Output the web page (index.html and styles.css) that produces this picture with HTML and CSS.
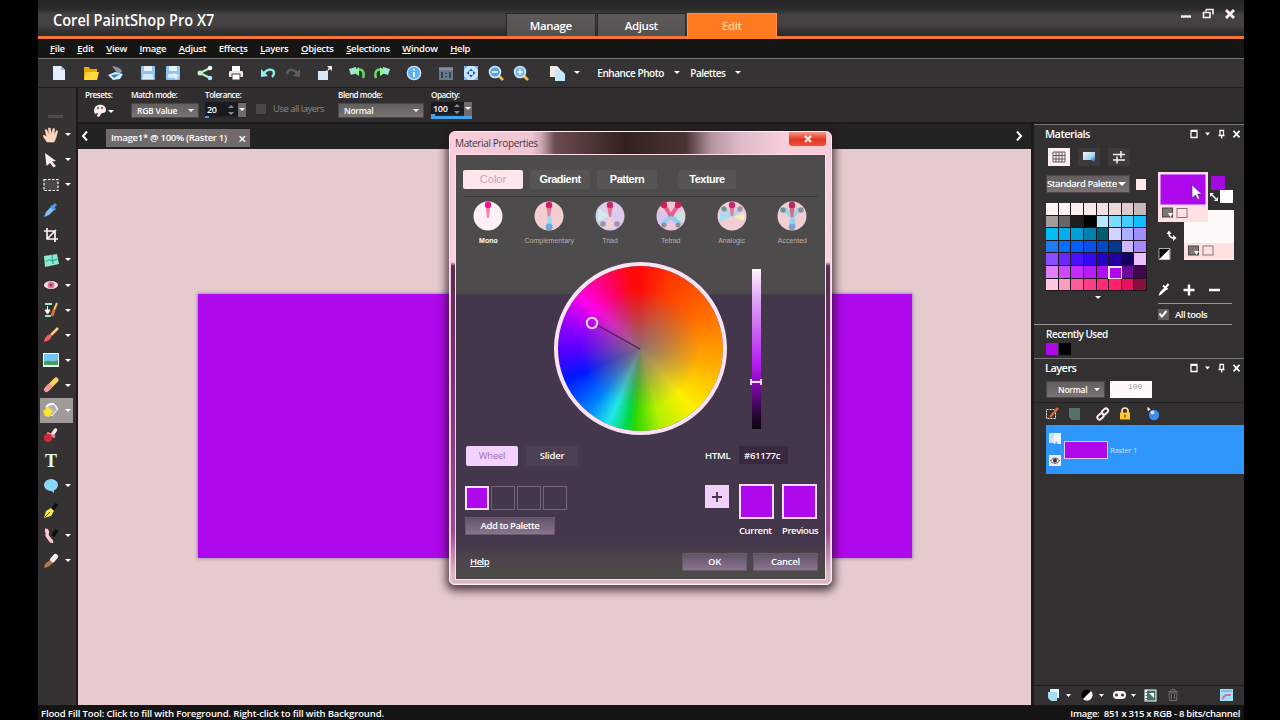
FILE: index.html
```
<!DOCTYPE html>
<html lang="en">
<head>
    <meta charset="UTF-8">
    <title>Corel PaintShop Pro X7</title>
    <link rel="stylesheet" href="styles.css">
</head>
<body>
<div class="app">
    <header class="titlebar">
        <div class="brand">Corel PaintShop Pro X7</div>
        <nav class="workspaces">
            <span class="ws">Manage</span>
            <span class="ws">Adjust</span>
            <span class="ws active">Edit</span>
        </nav>
        <svg class="win-buttons" width="56" height="14" viewBox="0 0 56 14">
            <path d="M1 9.5h10" stroke="#ffeef0" stroke-width="2.4"/>
            <path d="M26 2.5h7v5M26 2.5v2M23.5 5.5h6.500v5h-6.500z" fill="none" stroke="#ffeef0" stroke-width="1.6"/>
            <path d="M46 3l8 8M54 3l-8 8" stroke="#ffeef0" stroke-width="2.8"/>
        </svg>
    </header>

    <nav class="menu">
        <span><u>F</u>ile</span><span><u>E</u>dit</span><span><u>V</u>iew</span><span><u>I</u>mage</span><span><u>A</u>djust</span><span>Effec<u>t</u>s</span><span><u>L</u>ayers</span><span><u>O</u>bjects</span><span><u>S</u>elections</span><span><u>W</u>indow</span><span><u>H</u>elp</span>
    </nav>

    <div class="toolbar">
        <div class="group">
            <svg class="ico" viewBox="0 0 16 16"><path d="M2 1h8l4 4v10H2z" fill="#e4efff"/><path d="M10 1l4 4h-4z" fill="#9dbde8"/></svg>
        </div>
        <div class="group">
            <svg class="ico" viewBox="0 0 16 16"><path d="M1 2h5l1 2h7v11H1z" fill="#e8a800"/><path d="M3 7h13l-2 8H1z" fill="#ffd83a"/></svg>
            <svg class="ico" viewBox="0 0 16 16"><path d="M4 1c6 1 10 3 10 6l-4 2z" fill="#8f97a5"/><path d="M0 10l7-3 8 2-3 5-7 1z" fill="#d7ecff"/><path d="M3 10l9-1-6 4z" fill="#2585d0"/></svg>
        </div>
        <div class="group">
            <svg class="ico" viewBox="0 0 16 16"><rect x="1" y="1" width="14" height="14" rx="1" fill="#8fc2f5"/><rect x="4" y="1" width="8" height="5" fill="#e6f3ff"/><rect x="3" y="9" width="10" height="5" fill="#d4eaff"/></svg>
            <svg class="ico" viewBox="0 0 16 16"><rect x="1" y="1" width="14" height="14" rx="1" fill="#8fc2f5"/><rect x="4" y="1" width="8" height="5" fill="#e6f3ff"/><rect x="3" y="9" width="8" height="4" fill="#d4eaff"/><path d="M8 8l6 2-3 5z" fill="#eef"/></svg>
        </div>
        <div class="group">
            <svg class="ico" viewBox="0 0 16 16"><path d="M13 3L3 8l10 5" fill="none" stroke="#bdf0c4" stroke-width="2"/><circle cx="13" cy="3" r="2.300" fill="#e5fff0"/><circle cx="3" cy="8" r="2.500" fill="#c2f5c2"/><circle cx="13" cy="13" r="2.300" fill="#a8e4ff"/></svg>
        </div>
        <div class="group">
            <svg class="ico" viewBox="0 0 16 16"><rect x="4" y="1" width="8" height="5" fill="#fff"/><rect x="1" y="6" width="14" height="6" rx="1" fill="#f3e5e8"/><rect x="4" y="9" width="8" height="6" fill="#fff" stroke="#444"/></svg>
        </div>
        <div class="group">
            <svg class="ico" viewBox="0 0 16 16"><path d="M4 8c4-5 10-4 10 0 0 2-1 3-2 4" fill="none" stroke="#8df0e8" stroke-width="2.400"/><path d="M1 4v8l7-1z" fill="#8df0f0"/></svg>
            <svg class="ico" viewBox="0 0 16 16"><path d="M12 8C8 3 3 4 2 9" fill="none" stroke="#5d5d5f" stroke-width="2.400"/><path d="M15 4v8l-7-1z" fill="#5d5d5f"/></svg>
        </div>
        <div class="group">
            <svg class="ico" viewBox="0 0 16 16"><rect x="1" y="6" width="10" height="9" fill="#d5e8fb"/><path d="M9 7l5-5" stroke="#fff" stroke-width="1.600" stroke-dasharray="2 1"/><path d="M10 1h5v5z" fill="#fff2d8"/></svg>
        </div>
        <div class="group">
            <svg class="ico" viewBox="0 0 16 16"><path d="M0 4l7-2 1 6-6 2z" fill="#a4e8dd"/><path d="M8 5c5-2 8 2 6 8" fill="none" stroke="#67e068" stroke-width="2.400"/><path d="M4 7l6-5v9z" fill="#8df59b"/></svg>
            <svg class="ico" viewBox="0 0 16 16"><path d="M16 4L9 2 8 8l6 2z" fill="#a4e8dd"/><path d="M8 5C3 3 0 7 2 13" fill="none" stroke="#67e068" stroke-width="2.400"/><path d="M12 7L6 2v9z" fill="#8df59b"/></svg>
        </div>
        <div class="group">
            <svg class="ico" viewBox="0 0 16 16"><circle cx="8" cy="8" r="6.700" fill="#5fb0ee" stroke="#c9eaff" stroke-width="1.300"/><path d="M8 7v5M8 4v1.500" stroke="#e2f4ff" stroke-width="2"/></svg>
        </div>
        <div class="group zooms">
            <svg class="ico" viewBox="0 0 16 16"><rect x="1" y="2" width="14" height="13" fill="#69788a"/><path d="M1 4h14" stroke="#99a7b6"/><path d="M4 7v6M8 8v1M8 11v1M12 7v6" stroke="#2b333d" stroke-width="1.500"/></svg>
            <svg class="ico" viewBox="0 0 16 16"><rect x="1" y="1" width="14" height="14" fill="#c9e6ff"/><path d="M1 1h4L1 5zM15 1v4l-4-4zM1 15v-4l4 4zM15 15h-4l4-4z" fill="#6fbaf7"/><path d="M8 3.500l2 2.500H6zM8 12.500l2-2.500H6zM3.500 8L6 6v4zM12.500 8L10 6v4z" fill="#2454c8"/></svg>
            <svg class="ico" viewBox="0 0 16 16"><path d="M11 11l4 4" stroke="#f5b34b" stroke-width="3"/><circle cx="7" cy="7" r="5.500" fill="#55a6e8" stroke="#cfeaff" stroke-width="1.600"/><path d="M4 7h6" stroke="#fff" stroke-width="1.600"/></svg>
            <svg class="ico" viewBox="0 0 16 16"><path d="M11 11l4 4" stroke="#f5b34b" stroke-width="3"/><circle cx="7" cy="7" r="5.500" fill="#6db4ec" stroke="#cfeaff" stroke-width="1.600"/><path d="M4 7h6M7 4v6" stroke="#fff" stroke-width="1.600"/></svg>
        </div>
        <div class="group paste">
            <svg class="ico" viewBox="0 0 16 16"><path d="M1 1h7l3 3v8H1z" fill="#f1e9e4"/><path d="M6 5h6l4 4v7H6z" fill="#c5e6fb"/></svg>
            <i class="caret"></i>
        </div>
        <span class="tb-text enhance">Enhance Photo</span><i class="caret"></i>
        <span class="tb-text palettes">Palettes</span><i class="caret"></i>
    </div>

    <div class="workarea">
        <aside class="tools">
            <div class="grip"></div>
            <div class="tool"><svg class="ico" viewBox="0 0 16 16"><path d="M4 15L0 9l1-1 3 2-2-7 1.500-.5L6 8 5.500 1h1.800L8.500 7.500 10 1.500l1.600.3L11 8.500l2.500-5 1.300.7L12.500 12 11 15z" fill="#ffd6bd" stroke="#ffd6bd" stroke-width=".6"/></svg><i class="caret"></i></div>
            <div class="tool"><svg class="ico" viewBox="0 0 16 16"><path d="M2 1l11 8-4 .5 4 4.500-2.500 1.500-3.500-4.500-3.500 3z" fill="#fff0f2"/></svg><i class="caret"></i></div>
            <div class="tool"><svg class="ico" viewBox="0 0 16 16"><rect x="1" y="2.500" width="14" height="11" fill="#4b4849" stroke="#fff" stroke-width="1.200" stroke-dasharray="2.500 1.500"/></svg><i class="caret"></i></div>
            <div class="tool"><svg class="ico" viewBox="0 0 16 16"><path d="M1 15l2-5 6-6 3 3-6 6z" fill="#7cc0ff"/><path d="M8 4l4 4M10 5l3-3" stroke="#4b9ce8" stroke-width="3"/></svg></div>
            <div class="tool"><svg class="ico" viewBox="0 0 16 16"><path d="M4 1v11h11M1 4h11v11M4 12l9-9" fill="none" stroke="#fff0f0" stroke-width="1.700"/></svg></div>
            <div class="tool"><svg class="ico" viewBox="0 0 16 16"><path d="M1 4l13-2 2 10-14 3z" fill="#8beacb"/><path d="M3 10c3-6 5 2 11-3M9 3l1 9" fill="none" stroke="#3ca5a2" stroke-width="1.300"/></svg><i class="caret"></i></div>
            <div class="tool"><svg class="ico" viewBox="0 0 16 16"><ellipse cx="8" cy="8" rx="7" ry="4" fill="#f7e3e6"/><circle cx="8" cy="8" r="3.500" fill="#d87892"/><circle cx="8" cy="8" r="1.500" fill="#a23d60"/></svg><i class="caret"></i></div>
            <div class="tool"><svg class="ico" viewBox="0 0 16 16"><path d="M2 2h7M2 14h6" stroke="#9de8c8" stroke-width="2"/><path d="M4.500 4v4M2 8h5l-2.500 4z" stroke="#fff" fill="#fff"/><path d="M14 1L11 8" stroke="#f0c96a" stroke-width="2"/><path d="M11 8l-2 6" stroke="#e07030" stroke-width="3"/></svg><i class="caret"></i></div>
            <div class="tool"><svg class="ico" viewBox="0 0 16 16"><path d="M15 1L8 8" stroke="#ffc978" stroke-width="2.500"/><path d="M1 15c0-4 3-7 6-8l2 2c-2 4-4 5-8 6z" fill="#f0605c"/></svg><i class="caret"></i></div>
            <div class="tool"><svg class="ico" viewBox="0 0 16 16"><rect y="1" width="16" height="14" fill="#e9f7ff"/><rect x="1" y="2" width="14" height="8" fill="#73c5f7"/><path d="M1 10c4-3 8 1 14-2v5H1z" fill="#4c9b54"/></svg><i class="caret"></i></div>
            <div class="tool"><svg class="ico" viewBox="0 0 16 16"><path d="M5 11l8-8" stroke="#f7d35c" stroke-width="5" stroke-linecap="round"/><path d="M3.500 12.500l3-3" stroke="#f59b98" stroke-width="5" stroke-linecap="round"/></svg><i class="caret"></i></div>
            <div class="tool active"><svg class="ico" viewBox="0 0 16 16"><path d="M4 5l6-4 5 6-6 7-6-5z" fill="#b6b2b5" stroke="#fff"/><path d="M3 5c3-5 10-4 11 2" fill="none" stroke="#fff" stroke-width="1.400"/><path d="M0 9l5-4 5 4-4 6-4-1z" fill="#ffe42c"/></svg><i class="caret"></i></div>
            <div class="tool"><svg class="ico" viewBox="0 0 16 16"><path d="M12.500 3L9 8" stroke="#ffe8ec" stroke-width="3.500" stroke-linecap="round"/><path d="M4 6l8 4" stroke="#e8858a" stroke-width="3"/><circle cx="5" cy="11" r="4" fill="#d82836"/></svg></div>
            <div class="tool"><span class="type-tool">T</span></div>
            <div class="tool"><svg class="ico" viewBox="0 0 16 16"><ellipse cx="8" cy="7" rx="7" ry="6" fill="#8ad8f5"/><path d="M7 12l4-1v4z" fill="#8ad8f5"/></svg><i class="caret"></i></div>
            <div class="tool"><svg class="ico" viewBox="0 0 16 16"><path d="M14 1L9 7" stroke="#0d0d0d" stroke-width="3.500"/><path d="M1 15l2-7 5-3 3 3-3 5z" fill="#f4ea51"/><path d="M2 14l5-5" stroke="#554c14"/></svg></div>
            <div class="tool"><svg class="ico" viewBox="0 0 16 16"><path d="M14 2l-4 6" stroke="#0d0d0d" stroke-width="4"/><path d="M2 2c5 1 0 4 3 7s2 5 5 4" fill="none" stroke="#ffc9ca" stroke-width="3.500"/></svg><i class="caret"></i></div>
            <div class="tool"><svg class="ico" viewBox="0 0 16 16"><path d="M12.500 3.500L9.500 7" stroke="#fff2f2" stroke-width="5" stroke-linecap="round"/><path d="M7 7l3 3-5 4-4 1 1-4z" fill="#b27840"/></svg><i class="caret"></i></div>
        </aside>

        <div class="options">
            <div class="opt presets">
                <label>Presets:</label>
                <div class="preset-pick"><svg class="ico" viewBox="0 0 16 16"><path d="M2 8c0-8 12-8 12-1 0 4-4 2-5 4s-2 4-4 2l1-3-3 1z" fill="#ffecee"/><circle cx="6" cy="5" r="1.200" fill="#777"/><circle cx="10" cy="5" r="1.200" fill="#777"/></svg><i class="caret"></i></div>
            </div>
            <div class="opt match"><label>Match mode:</label><div class="select">RGB Value<i class="caret"></i></div></div>
            <div class="opt tol"><label>Tolerance:</label><div class="spin">20<svg width="6" height="12" viewBox="0 0 6 12"><path d="M0 4l3-3 3 3zM0 8l3 3 3-3z" fill="#8b8889"/></svg><b><i class="caret"></i></b></div></div>
            <div class="use-all"><i></i>Use all layers</div>
            <div class="opt blend"><label>Blend mode:</label><div class="select">Normal<i class="caret"></i></div></div>
            <div class="opt opac"><label>Opacity:</label><div class="spin full">100<svg width="6" height="12" viewBox="0 0 6 12"><path d="M0 4l3-3 3 3zM0 8l3 3 3-3z" fill="#8b8889"/></svg><b><i class="caret"></i></b></div></div>
        </div>

        <main class="document">
            <div class="doc-tabs">
                <svg width="8" height="12" viewBox="0 0 8 12"><path d="M6 1.500L2 6l4 4.500" fill="none" stroke="#fff" stroke-width="2"/></svg>
                <div class="doc-tab">Image1* @ 100% (Raster 1)<span>×</span></div>
                <svg class="next" width="8" height="12" viewBox="0 0 8 12"><path d="M2 1.500L6 6l-4 4.500" fill="none" stroke="#fff" stroke-width="2"/></svg>
            </div>
            <div class="canvas"><div class="artwork"></div></div>
        </main>

        <aside class="panels">
            <section class="materials">
                <h2>Materials
                    <svg width="54" height="10" viewBox="0 0 54 10"><path d="M2 1.500h6v7H2z" fill="none" stroke="#fff" stroke-width="1.300"/><path d="M2 2h6" stroke="#fff" stroke-width="2"/><path d="M16 3.500h5l-2.500 3z" fill="#fff"/><path d="M31 1.500h3.500v5H31zM29.500 6.500h6M32.700 6.500v3" fill="none" stroke="#fff" stroke-width="1.300"/><path d="M44.500 1.800l6 6.500M50.500 1.800l-6 6.500" stroke="#fff" stroke-width="1.700"/></svg>
                </h2>
                <div class="mat-tabs">
                    <span class="on"><svg width="14" height="12" viewBox="0 0 14 12"><path d="M1 1h12v10H1zM4 1v10M7 1v10M10 1v10M1 4.500h12M1 8h12" fill="none" stroke="#665b60"/></svg></span>
                    <span><svg width="12" height="12" viewBox="0 0 12 12"><defs><linearGradient id="rb" y2="1"><stop stop-color="#fff4ec"/><stop offset=".6" stop-color="#9fd8f5"/><stop offset="1" stop-color="#2b4d8c"/></linearGradient></defs><path d="M0 1h12v10l-4-2H0z" fill="url(#rb)"/></svg></span>
                    <span><svg width="14" height="14" viewBox="0 0 14 14"><path d="M1 4.500h12M1 10h12M9 1v7M5 6.500v7" stroke="#fff0f0" stroke-width="1.500"/></svg></span>
                </div>
                <div class="mat-body">
                    <div class="mat-left">
                        <div class="mat-select"><div class="select">Standard Palette<i class="caret"></i></div><i class="chip"></i></div>
                        <div class="palette" id="palette"></div>
                        <i class="caret more"></i>
                    </div>
                    <div class="mat-right">
                        <svg width="78" height="130" viewBox="1158 172 78 130">
                            <rect x="1184" y="210" width="50" height="50" fill="#fffafa"/>
                            <rect x="1184" y="243" width="50" height="16" fill="#ffe1e1"/>
                            <rect x="1158" y="172" width="50" height="50" fill="#ffe1e1"/>
                            <rect x="1159.500" y="173.500" width="47" height="32" fill="#ae08ed" stroke="#fbdcf5" stroke-width="2"/>
                            <g stroke="#4b4746"><rect x="1162.500" y="208" width="10" height="9" fill="#7d7672"/><rect x="1188.500" y="246" width="10" height="9" fill="#7d7672"/></g>
                            <path d="M1168 213h5l-2.500 4zM1194 251h5l-2.500 4z" fill="#fff"/>
                            <g fill="none" stroke="#877577"><rect x="1177" y="208.500" width="10" height="9"/><rect x="1203" y="246" width="10" height="9"/></g>
                            <rect x="1211" y="176" width="14" height="14" fill="#a30ae0"/>
                            <rect x="1220" y="190" width="13" height="13" fill="#fff"/>
                            <path d="M1212 195l4 4M1169 233c0 4 2 5 5 5" fill="none" stroke="#fff" stroke-width="1.600"/>
                            <path d="M1210 197l0-4h4zM1218 197v4h-4zM1166.500 234l2.500-3.500 2.500 3.500zM1173 235l3.500 3-3.500 3z" fill="#fff"/>
                            <path d="M1159 249h10.500l-10.500 10.500z" fill="#000"/><path d="M1169.500 249v10.500H1159z" fill="#fff"/><path d="M1159 248.500h11v11h-11z" fill="none" stroke="#ddd" stroke-width=".7"/>
                            <path d="M1158.500 296l1.500-4 5-5 2 2-5 5z" fill="#fff"/><path d="M1163 285.500l4.500 4M1166 287l2.500-3" stroke="#fff" stroke-width="2"/>
                            <path d="M1183.500 290h11M1189 284.500v11M1209 290h11" stroke="#fff" stroke-width="2.400"/>
                            <path d="M1192 185v13l3.500-3 2.300 4.500 2-1-2.200-4.500h4z" fill="#fff" stroke="#493049" stroke-width=".6"/>
                        </svg>
                        <div class="all-tools"><i><svg width="10" height="10" viewBox="0 0 10 10"><path d="M1.500 4.500L4 7.500 8.500 2" fill="none" stroke="#fff" stroke-width="2"/></svg></i>All tools</div>
                    </div>
                </div>
                <div class="recent"><p>Recently Used</p><i class="violet"></i><i class="black"></i></div>
            </section>

            <section class="layers">
                <h2>Layers
                    <svg width="54" height="10" viewBox="0 0 54 10"><path d="M2 1.500h6v7H2z" fill="none" stroke="#fff" stroke-width="1.300"/><path d="M2 2h6" stroke="#fff" stroke-width="2"/><path d="M16 3.500h5l-2.500 3z" fill="#fff"/><path d="M31 1.500h3.500v5H31zM29.500 6.500h6M32.700 6.500v3" fill="none" stroke="#fff" stroke-width="1.300"/><path d="M44.500 1.800l6 6.500M50.500 1.800l-6 6.500" stroke="#fff" stroke-width="1.700"/></svg>
                </h2>
                <div class="layer-opts"><div class="select">Normal<i class="caret"></i></div><div class="percent">100</div></div>
                <div class="layer-tools">
                    <svg width="120" height="16" viewBox="1044 406 120 16">
                        <rect x="1046.500" y="409.500" width="9" height="9" fill="none" stroke="#fff" stroke-dasharray="2 1"/><path d="M1058 408l-8 9" stroke="#d7673a" stroke-width="2.400"/>
                        <path d="M1069 408h11v12h-8l-3-3z" fill="#57716c"/>
                        <g fill="none" stroke="#ffeef0" stroke-width="1.900"><rect x="-3.500" y="-2.200" width="7" height="4.400" rx="2.200" transform="translate(1100.500 416.500) rotate(-42)"/><rect x="-3.500" y="-2.200" width="7" height="4.400" rx="2.200" transform="translate(1105 411.500) rotate(-42)"/></g>
                        <path d="M1122 413v-2c0-4 6-4 6 0v2" fill="none" stroke="#ffe5b5" stroke-width="1.700"/><rect x="1120" y="412.500" width="10" height="7" fill="#ffc62e"/><path d="M1125 414.500v3" stroke="#805800" stroke-width="1.500"/>
                        <circle cx="1154" cy="415" r="5.200" fill="#3c8bea"/><circle cx="1152.500" cy="412.500" r="2" fill="#c4e4ff"/><path d="M1148 407.500l2 2 -2 1z" stroke="#fff" fill="#fff"/>
                    </svg>
                </div>
                <div class="layer-row">
                    <svg width="14" height="40" viewBox="0 0 14 40"><path d="M3 3h10v11H6l-3-3z" fill="#ebf4ff"/><path d="M1 3h5v10H1z" fill="#cde3fb"/><path d="M6 14l3-3 1 3z" fill="#8ab0e0"/><rect x="1" y="25" width="12" height="11" fill="#f5eaf0"/><path d="M2.500 31c2.500-4 6.500-4 9 0-2.500 3-6.500 3-9 0z" fill="none" stroke="#555"/><circle cx="7" cy="30.500" r="2" fill="#333"/></svg>
                    <div class="thumb"></div><span>Raster 1</span>
                </div>
                <div class="layer-foot">
                    <svg width="200" height="16" viewBox="1044 687 200 16">
                        <path d="M1050 689h9v9h-9z" fill="#eaf6ff"/><path d="M1048 692h9l0 9h-6l-3-3z" fill="#a8dbf5"/>
                        <circle cx="1087" cy="695" r="5.500" fill="#000"/><path d="M1091 691a5.500 5.500 0 0 1-8 8z" fill="#fff"/>
                        <rect x="1113" y="691" width="13" height="8" rx="4" fill="#fff0f0"/><circle cx="1116.500" cy="695" r="1.500" fill="#333"/><circle cx="1122.500" cy="695" r="1.500" fill="#333"/>
                        <rect x="1145" y="690" width="11" height="11" fill="#46706a" stroke="#fff"/><path d="M1149 693h5v5z" fill="#fff"/><path d="M1146 690v10" stroke="#fff" stroke-width="2" stroke-dasharray="2 1"/>
                        <path d="M1168 691.500h10M1171 691v-1.500h4v1.500M1169 693h8l-.5 7.500h-7z" stroke="#6f6b6c" fill="none"/><path d="M1171.500 694v5M1174.500 694v5" stroke="#6f6b6c"/>
                        <path d="M1066 694h5l-2.500 3zM1099 694h5l-2.500 3zM1131 694h5l-2.500 3z" fill="#fff"/>
                        <rect x="1220" y="689" width="13" height="12" fill="#9fe3f5"/><path d="M1222 699l4-4h5" stroke="#d86ab2" stroke-width="2" fill="none"/><path d="M1221 691h11" stroke="#4d9fd0"/>
                    </svg>
                </div>
            </section>
        </aside>
    </div>

    <footer class="status"><span class="hint">Flood Fill Tool: Click to fill with Foreground. Right-click to fill with Background.</span><span class="info">Image:&nbsp; 851 x 315 x RGB - 8 bits/channel</span></footer>

    <div class="dialog">
        <div class="dlg-title"><span>Material Properties</span><div class="dlg-close"><svg width="10" height="8" viewBox="0 0 10 8"><path d="M2 1l6 6M8 1L2 7" stroke="#ffe9e6" stroke-width="2.300"/></svg></div></div>
        <div class="dlg-body">
            <div class="dlg-tabs"><span class="on">Color</span><span>Gradient</span><span>Pattern</span><span class="texture">Texture</span></div>
            <div class="harmonies">
                <div class="on"><svg width="30" height="30" viewBox="0 0 30 30"><circle cx="15" cy="15" r="14.500" fill="#fff1f3"/><path d="M12.500 4h5L16 17h-2z" fill="#f587b5"/><circle cx="15" cy="4" r="3.200" fill="#ee1187"/></svg>Mono</div>
                <div><svg width="30" height="30" viewBox="0 0 30 30"><circle cx="15" cy="15" r="14.500" fill="#f3cfd2"/><path d="M12 3h6l-2 14h-2z" fill="#e77ea2"/><path d="M12 27l2-12h3l2 12z" fill="#9fd8ee"/><circle cx="15" cy="4" r="3.200" fill="#d61c68"/><circle cx="15" cy="26" r="3.500" fill="#6fa6df"/></svg>Complementary</div>
                <div><svg width="30" height="30" viewBox="0 0 30 30"><circle cx="15" cy="15" r="14.500" fill="#dccbea"/><path d="M15 15L3 7v13z" fill="#cfecec"/><path d="M15 15L7 27h14z" fill="#f3d0d4"/><path d="M12 4h6l-2 12h-2z" fill="#ea7597"/><circle cx="15" cy="4" r="3.200" fill="#c8266a"/><circle cx="8" cy="23" r="2.800" fill="#8d9aa8"/><circle cx="22" cy="23" r="2.800" fill="#a18fae"/></svg>Triad</div>
                <div><svg width="30" height="30" viewBox="0 0 30 30"><circle cx="15" cy="15" r="14.500" fill="#efc6d5"/><path d="M15 15L2 9v14z" fill="#d6c5f1"/><path d="M15 15l13-5v12z" fill="#c9e6e0"/><path d="M15 15L6 24M15 15l9 9" stroke="#9bcced" stroke-width="5"/><path d="M15 15L8 4M15 15l7-11" stroke="#e65d8f" stroke-width="4"/><circle cx="8" cy="4" r="3.200" fill="#cf205b"/><circle cx="22" cy="4" r="3.200" fill="#cf205b"/><circle cx="8" cy="24" r="2.500" fill="#8d8da0"/><circle cx="22" cy="24" r="2.500" fill="#8d8da0"/></svg>Tetrad</div>
                <div><svg width="30" height="30" viewBox="0 0 30 30"><circle cx="15" cy="15" r="14.500" fill="#f1ced3"/><path d="M15 15L3 11v10z" fill="#a9d9f4"/><path d="M15 15l12-2v7z" fill="#f6efb0"/><path d="M15 15L8 9M15 15l8-6" stroke="#b0d7e8" stroke-width="4"/><path d="M12 4h6l-2 11h-2z" fill="#e9789a"/><circle cx="15" cy="4" r="3.200" fill="#c8266a"/><circle cx="7" cy="8" r="2.700" fill="#6b98a0"/><circle cx="23" cy="8" r="2.700" fill="#9494b5"/></svg>Analogic</div>
                <div><svg width="30" height="30" viewBox="0 0 30 30"><circle cx="15" cy="15" r="14.500" fill="#f1ced3"/><path d="M15 15L7 8M15 15l8-7" stroke="#a3d4dd" stroke-width="5"/><path d="M12 26l2-12h3l2 12z" fill="#93cdf0"/><path d="M12 4h6l-2 12h-2z" fill="#d6678e"/><circle cx="15" cy="4" r="3.200" fill="#b82a63"/><circle cx="6" cy="9" r="2.700" fill="#6b98a0"/><circle cx="24" cy="9" r="2.700" fill="#8a87a0"/><circle cx="15" cy="26" r="3.300" fill="#7ba2d5"/></svg>Accented</div>
            </div>
            <div class="picker">
                <div class="wheel"><svg width="164" height="164" viewBox="0 0 164 164"><path d="M39 59l43 24" stroke="#4f1d50" stroke-width="1.300"/><circle cx="34" cy="57" r="5.200" fill="none" stroke="#ffd9fa" stroke-width="2"/></svg></div>
                <div class="value"><svg width="14" height="8" viewBox="0 0 14 8"><path d="M2 1v6M12 1v6M2 4h10" stroke="#ffe2ff" stroke-width="1.800"/></svg></div>
            </div>
            <div class="mode"><span class="on">Wheel</span><span>Slider</span><label>HTML</label><div class="hex">#61177c</div></div>
            <div class="swatches">
                <div class="user">
                    <div class="slots"><i class="on"></i><i></i><i></i><i></i></div>
                    <div class="btn add">Add to Palette</div>
                </div>
                <div class="compare">
                    <span class="plus"><svg width="12" height="12" viewBox="0 0 12 12"><path d="M1 6h10M6 1v10" stroke="#46344c" stroke-width="1.800"/></svg></span>
                    <div class="cmp"><i></i>Current</div>
                    <div class="cmp"><i></i>Previous</div>
                </div>
            </div>
            <div class="dlg-foot"><u>Help</u><div class="btn">OK</div><div class="btn">Cancel</div></div>
        </div>
    </div>
</div>
<script>
    const colors = [
        '#fff4f4', '#fff2f2', '#ffeeee', '#f8eaea', '#eee2e6', '#ecdada', '#dccbcd', '#c6b8b6',
        '#a59a9a', '#6a6464', '#1e1e1e', '#000000', '#b5e9ff', '#7ddcff', '#3fd0ff', '#10bfff',
        '#00bdf5', '#00aeea', '#009fd5', '#0080aa', '#005a70', '#d4d2ff', '#aab0ff', '#a090ff',
        '#1c7cf5', '#0070ff', '#0060f8', '#0a50e8', '#0048c8', '#003a90', '#cdb8ff', '#a488ff',
        '#8a4cff', '#6a28ff', '#4a10ff', '#3208f4', '#2404c8', '#2000a0', '#140060', '#ecc0ff',
        '#e080ff', '#d048ff', '#c52cff', '#b81cf8', '#ae10f0', '#ae08ed', '#6c0a9c', '#3c0a4a',
        '#ffc8e0', '#ff9ac0', '#ff5c9a', '#ff3c86', '#ff2a72', '#ff2070', '#e81060', '#860f3c'
    ];
    const selected = 45;
    document.getElementById('palette').innerHTML = colors.map((c, i) =>
        `<i style="background:${c}"${i === selected ? ' class="sel"' : ''}></i>`).join('');
</script>
</body>
</html>
```
FILE: styles.css
```
* {
    box-sizing: border-box;
}

body {
    margin: 0;
    background: #000;
    color: #fff;
    font: 600 9.5px/12px "Open Sans", "Noto Sans", sans-serif;
    overflow: hidden;
}

i {
    display: block;
    flex: none;
}

svg {
    display: block;
    flex: none;
}

.app {
    position: relative;
    width: 1206px;
    height: 720px;
    margin-left: 38px;
    background: #2f2d2e;
    white-space: nowrap;
}

.ico {
    width: 16px;
    height: 16px;
}

.caret {
    width: 0;
    height: 0;
    border: 3px solid transparent;
    border-top-color: #fff;
    border-bottom: 0;
}

/* title bar */
.titlebar {
    display: flex;
    height: 39px;
    padding-left: 15px;
    border-bottom: 3px solid #f2763a;
    background: linear-gradient(#262626, #2c2b2c 25%, #454343 42%, #434142 70%, #302f30 90%, #2c2b2c);
}

.brand {
    width: 453px;
    font-size: 17px;
    line-height: 40px;
    transform: scaleX(.856);
    transform-origin: 0 0;
}

.workspaces {
    display: flex;
    gap: 1px;
    padding-top: 13px;
}

.ws {
    width: 89.500px;
    height: 23px;
    background: linear-gradient(#5e5a5a, #545151);
    border: 1px solid #292728;
    border-bottom: 0;
    font-size: 11.500px;
    line-height: 24px;
    letter-spacing: -.4px;
    text-align: center;
}

.ws.active {
    height: 26px;
    background: #ff7b22;
    border-color: #ff9047;
    color: #ffd2a6;
}

.win-buttons {
    margin: 7px 8px 0 auto;
}

/* menu */
.menu {
    display: flex;
    gap: 12.500px;
    height: 20px;
    padding-left: 12px;
    border-bottom: 1px solid #777;
    background: #151514;
    line-height: 19px;
    font-size: 9.500px;
    letter-spacing: -.28px;
}

/* main toolbar */
.toolbar {
    display: flex;
    align-items: center;
    height: 29px;
    padding: 0 0 1px 13px;
    border-bottom: 1px solid #1d1b1c;
    background: #353334;
    font-size: 10px;
}

.group {
    display: flex;
    align-items: center;
    gap: 9px;
    margin-right: 15.850px;
}

.zooms {
    gap: 9.300px;
}

.paste {
    margin-left: 4px;
    margin-right: 17px;
}

.enhance {
    width: 77px;
    letter-spacing: -.45px;
}

.palettes {
    width: 45px;
    margin-left: 10px;
    letter-spacing: -.5px;
}

/* work area */
.workarea {
    display: grid;
    grid-template: 36px 581px / 40px 953px 213px;
    height: 617px;
}

.tools {
    grid-row: 1 / 3;
    padding-right: 3px;
    border-right: 2px solid #1b191a;
    background: #343233;
}

.grip {
    width: 15px;
    height: 3px;
    margin: 27px 0 4px 10px;
    background: #4d4b4c;
}

.tool {
    display: flex;
    align-items: center;
    gap: 6px;
    height: 25.080px;
    padding-left: 5px;
    border: 1px solid transparent;
    border-left: 0;
}

.tool.active {
    margin-left: 2px;
    padding-left: 3px;
    background: #a09a9a;
}

.type-tool {
    width: 16px;
    color: #d9fff0;
    font: bold 18px/20px "Liberation Serif", serif;
    text-align: center;
}

/* tool options */
.options {
    grid-column: 2 / 4;
    display: flex;
    padding: 0 0 0 7px;
    border-bottom: 2px solid #1c1a1b;
    font-size: 8.500px;
    line-height: 14px;
}

.opt label {
    display: block;
    height: 15px;
    font-size: 8.200px;
    letter-spacing: -.5px;
}

.presets {
    width: 46px;
}

.preset-pick {
    display: flex;
    align-items: center;
    padding-left: 7px;
}

.match {
    width: 74px;
}

.match .select {
    width: 68px;
}

.tol {
    width: 50px;
}

.select {
    display: flex;
    align-items: center;
    justify-content: space-between;
    height: 15px;
    padding: 0 4px 0 5px;
    border: 1px solid #4a4748;
    background: linear-gradient(#625e5f, #7b7273);
    letter-spacing: -.25px;
}

.spin {
    display: flex;
    align-items: center;
    gap: 4px;
    width: 41px;
    height: 16px;
    padding-left: 2px;
    margin-top: -1px;
    background: linear-gradient(90deg, #45a1ec 4px, #24282e 4px) 0 100% / 100% 2px no-repeat #191b20;
    font-size: 9px;
    letter-spacing: -.3px;
}

.spin svg {
    margin-left: auto;
}

.spin b {
    padding: 5px 1px;
    height: 14px;
    background: #706b6c;
}

.spin.full {
    border-bottom: 3px solid #45a1ec;
    height: 17px;
}

.use-all {
    display: flex;
    gap: 7px;
    align-items: center;
    width: 83px;
    padding-left: 1px;
    margin-top: 8px;
    color: #8d898b;
    font-size: 9.500px;
    font-weight: 400;
    letter-spacing: -.5px;
}

.use-all i {
    width: 10px;
    height: 10px;
    background: #494748;
}

.blend {
    width: 93px;
}

.blend .select {
    width: 86px;
}

/* document */
.document {
    display: flex;
    flex-direction: column;
    min-height: 0;
}

.doc-tabs {
    display: flex;
    height: 25px;
    padding: 6px 8px 0 3px;
    background: #242323;
}

.doc-tab {
    display: flex;
    justify-content: space-between;
    width: 144px;
    height: 18px;
    padding: 0 4px 0 5px;
    margin: -1px 0 0 17px;
    background: #716a6a;
    font-size: 9.500px;
    line-height: 17px;
    letter-spacing: -.28px;
}

.doc-tab span {
    font-size: 14px;
    line-height: 20px;
}

.next {
    margin-left: auto;
}

.canvas {
    flex: 1;
    padding: 145px 0 0 120px;
    background: #e5cbcd;
}

.artwork {
    width: 714px;
    height: 264px;
    background: #ae08ed;
    box-shadow: 0 0 3px 1px #a38bb8;
}

/* docked panels */
.panels {
    border-left: 3px solid #1c1a1b;
    background: #323031;
}

.panels h2 {
    display: flex;
    align-items: center;
    justify-content: space-between;
    height: 19px;
    margin: 0;
    padding: 0 1px 0 11px;
    border-top: 1px solid #777;
    font-size: 11px;
    font-weight: 600;
    letter-spacing: -.55px;
}

.materials {
    height: 234px;
}

.mat-tabs {
    display: flex;
    gap: 8px;
    height: 29px;
    padding: 5px 0 0 14px;
}

.mat-tabs span {
    display: grid;
    place-items: center;
    width: 22px;
    height: 18px;
    background: #3d3a3b;
}

.mat-tabs .on {
    background: #fff0f2;
}

.mat-body {
    display: flex;
    width: 198px;
    height: 153px;
    padding-left: 12px;
    border-bottom: 1px solid #9b9597;
}

.mat-left {
    flex: none;
    width: 112px;
}

.mat-select {
    display: flex;
    gap: 6px;
    align-items: center;
    margin: 3px 0 10px;
}

.mat-select .select {
    width: 84px;
    height: 18px;
    padding: 0 3px 0 0;
    font-size: 9.500px;
    letter-spacing: -.45px;
}

.mat-select .caret {
    border-width: 4px;
    border-bottom: 0;
}

.chip {
    width: 10px;
    height: 11px;
    background: #ffe9ea;
}

.palette {
    display: grid;
    grid-template-columns: repeat(8, 1fr);
    grid-auto-rows: 12.600px;
    width: 101px;
}

.palette i {
    border: solid #20151f;
    border-width: 0 1px 1px 0;
}

.palette .sel {
    border: 2px solid #ffe1ff;
    margin: 0 -1px -1px -1px;
}

.more {
    margin: 5px 0 0 49px;
}

.all-tools {
    display: flex;
    align-items: center;
    gap: 6px;
    width: 74px;
    height: 22px;
    margin-top: 1px;
    border-top: 1px solid #9b9597;
    letter-spacing: -.5px;
}

.all-tools i {
    width: 11px;
    height: 11px;
    background: #625e60;
}

.recent {
    display: flex;
    flex-wrap: wrap;
    gap: 0 1px;
    padding-left: 12px;
}

.recent p {
    width: 190px;
    margin: 4px 0 3px;
    font-size: 10px;
    line-height: 11px;
    letter-spacing: -.5px;
}

.recent i {
    width: 12px;
    height: 12px;
}

.violet {
    background: #ae08ed;
}

.black {
    background: #000;
}

.layers {
    display: flex;
    flex-direction: column;
    height: 347px;
}

.layer-opts {
    display: flex;
    gap: 5px;
    height: 26px;
    padding: 4px 0 0 12px;
    border-bottom: 1px solid #252324;
}

.layer-opts .select {
    width: 59px;
    height: 17px;
    padding-left: 11px;
    font-size: 8.500px;
}

.percent {
    width: 42px;
    height: 17px;
    background: #fffafa;
    color: #9b9797;
    font: 8px/11px "Liberation Mono", monospace;
    padding-left: 18px;
}

.layer-tools {
    height: 22px;
    padding: 3px 0 0 10px;
}

.layer-row {
    display: flex;
    align-items: center;
    height: 49px;
    margin-left: 12px;
    padding-left: 2px;
    background: #2f96fc;
    color: #bce0ff;
    font-size: 8px;
    font-weight: 400;
    letter-spacing: -.4px;
}

.thumb {
    width: 44px;
    height: 18px;
    margin: 0 2px;
    border: 1px solid #eac6ff;
    background: #ae08ed;
}

.layer-foot {
    height: 20px;
    margin-top: auto;
    padding: 1px 0 0 10px;
    border-top: 1px solid #1e1c1d;
}

/* status bar */
.status {
    display: flex;
    justify-content: space-between;
    height: 15px;
    padding: 0 4px 0 3px;
    background: #151414;
    font-size: 9.500px;
    line-height: 17px;
    letter-spacing: -.14px;
}

.info {
    letter-spacing: -.28px;
}

/* material dialog, floats over the document */
.dialog {
    position: absolute;
    left: 411px;
    top: 131px;
    width: 383px;
    height: 454px;
    padding: 0 5px 5px 5px;
    border: 1px solid #fff0f4;
    border-radius: 6px;
    background: linear-gradient(#f8cfdb, #f6d3dd 130px, #55304b 134px, #7a2a78 220px, #9c4c98 400px, #d9b9bd 440px);
    box-shadow: inset 0 0 0 1px #f3c4dc, 0 3px 8px 3px rgba(40, 20, 30, .75);
}

.dlg-title {
    display: flex;
    justify-content: space-between;
    height: 22px;
    margin: 0 -4px;
    border-radius: 5px 5px 0 0;
    background: linear-gradient(90deg, #f8cfdb 0, #f0c6d3 80px, #cfa9b5 90px, #6b4c50 104px, #33201f 175px, #4a3534 235px, #b493a0 260px, #e0bac9 290px, #f7cfdc 335px);
    color: #4c353c;
    font-weight: 400;
    font-size: 10px;
    line-height: 22px;
    letter-spacing: -.35px;
    padding-left: 4px;
}

.dlg-close {
    display: grid;
    place-items: center;
    width: 39px;
    height: 15px;
    margin-right: 3px;
    border: 1px solid #ffcdc8;
    border-top: 0;
    border-radius: 0 0 4px 4px;
    background: linear-gradient(#f59a86, #e23422 55%, #f0543c);
}

.dlg-body {
    height: 426px;
    padding: 15px 7px 0 7px;
    border: 1px solid #ffdbe8;
    background: linear-gradient(#4d4b4b 138px, #44364b 141px, #44364b 385px, #4c434b 402px, #4c4a49 420px);
}

.dlg-tabs {
    display: flex;
    gap: 7px;
    height: 27px;
    border-bottom: 1px solid #3b3939;
    font: bold 11px/19px "Liberation Sans", sans-serif;
    letter-spacing: -.5px;
}

.dlg-tabs span,
.mode span {
    width: 60px;
    height: 19px;
    border-radius: 2px;
    background: rgba(255, 255, 255, .05);
    text-align: center;
}

.dlg-tabs .on {
    background: #ffe6ea;
    color: #c2a5bf;
    font-weight: normal;
    letter-spacing: 0;
}

.dlg-tabs .texture {
    width: 58px;
    margin-left: 14px;
}

.harmonies {
    display: flex;
    height: 66px;
    margin: 4px -7px 0 -5px;
    font: 7px/9px "Liberation Sans", sans-serif;
    color: #b9aeb2;
    text-align: center;
}

.harmonies div {
    width: 60.800px;
}

.harmonies svg {
    margin: 0 auto 5px;
}

.harmonies .on {
    color: #fff;
    font-weight: bold;
}

.picker {
    display: flex;
    height: 178px;
    padding-left: 91px;
    margin-top: -5px;
}

.wheel {
    width: 173px;
    height: 173px;
    border: 4.500px solid #fbe2f4;
    border-radius: 50%;
    background:
        radial-gradient(closest-side, rgba(138, 112, 118, .95) 0, rgba(138, 112, 118, .6) 28%, rgba(138, 112, 118, 0) 72%) padding-box,
        conic-gradient(#ff0a0a 0deg, #ff3a00 25deg, #ff6a00 60deg, #ffa800 100deg, #fff000 140deg, #b4f000 165deg, #35d800 183deg, #00d84a 190deg, #20e8e8 203deg, #0080ff 220deg, #0018ff 247deg, #5500ff 268deg, #9000ff 287deg, #ff00e8 311deg, #ff0070 333deg, #ff0a0a 352deg) padding-box;
}

.value {
    width: 9px;
    height: 160px;
    margin: 7px 0 0 25px;
    padding-top: 109px;
    background: linear-gradient(#fff3ff, #dda2f4 20%, #b41cf0 60%, #7d08ab 73%, #1d0828 93%, #0b020f);
}

.value svg {
    margin-left: -3px;
}

.mode {
    display: flex;
    gap: 8px;
    height: 38px;
    margin: 6px 0 0 3px;
    letter-spacing: -.25px;
    line-height: 20px;
}

.mode span {
    width: 52px;
    height: 20px;
}

.mode .on {
    background: #f3d2ff;
    color: #a06fb4;
    font-weight: 400;
}

.mode label {
    margin-left: 119px;
    width: 26px;
}

.hex {
    width: 49px;
    height: 18px;
    padding-left: 5px;
    background: #38293f;
}

.swatches {
    display: flex;
    justify-content: space-between;
    height: 59px;
    padding: 0 0 0 2px;
}

.slots {
    display: flex;
    gap: 2px;
    padding-top: 2px;
}

.slots i {
    width: 24px;
    height: 24px;
    border: 1px solid #75647c;
}

.slots .on {
    border: 2px solid #ffdcff;
    background: #ae08ed;
}

.btn {
    width: 65px;
    height: 18px;
    border: 1px solid #675a69;
    background: linear-gradient(#625367, #8b7490);
    line-height: 16px;
    text-align: center;
    letter-spacing: -.25px;
}

.add {
    width: 90px;
    margin-top: 7px;
    letter-spacing: -.45px;
}

.compare {
    display: flex;
    width: 113px;
    gap: 8px;
}

.plus {
    display: grid;
    place-items: center;
    flex: none;
    width: 24px;
    height: 23px;
    margin: 1px 2px 0 0;
    background: #f0d0fa;
}

.cmp {
    width: 35px;
    letter-spacing: -.42px;
    line-height: 24px;
}

.cmp i {
    width: 35px;
    height: 35px;
    border: 2px solid #ffdcff;
    background: #ae08ed;
}

.dlg-foot {
    display: flex;
    gap: 6px;
    padding: 10px 0 0 7px;
}

.dlg-foot u {
    margin-right: auto;
    line-height: 18px;
    letter-spacing: -.5px;
}
```
